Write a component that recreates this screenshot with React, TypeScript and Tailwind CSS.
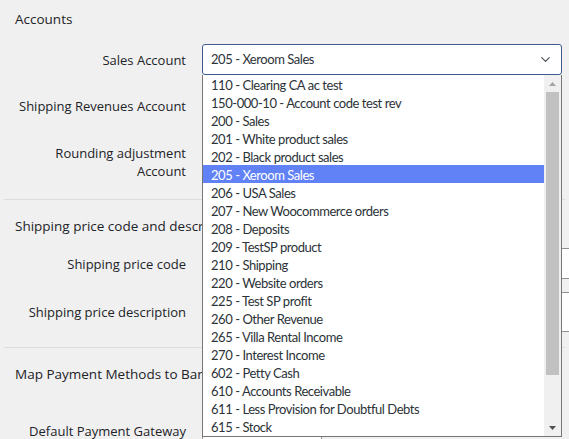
import { ChevronDown } from "lucide-react";

const accounts = [
  "110 - Clearing CA ac test",
  "150-000-10 - Account code test rev",
  "200 - Sales",
  "201 - White product sales",
  "202 - Black product sales",
  "205 - Xeroom Sales",
  "206 - USA Sales",
  "207 - New Woocommerce orders",
  "208 - Deposits",
  "209 - TestSP product",
  "210 - Shipping",
  "220 - Website orders",
  "225 - Test SP profit",
  "260 - Other Revenue",
  "265 - Villa Rental Income",
  "270 - Interest Income",
  "602 - Petty Cash",
  "610 - Accounts Receivable",
  "611 - Less Provision for Doubtful Debts",
  "615 - Stock",
];

const selected = "205 - Xeroom Sales";

function Label({ children }: { children: React.ReactNode }) {
  return <div className="w-[186px] shrink-0 text-right leading-[18px] text-[13px] text-[#1d2327]">{children}</div>;
}

function Dropdown() {
  return (
    <div className="absolute left-0 top-[31px] z-10 flex h-[362px] w-[360px] border border-[#767676] border-t-0 bg-white">
      <ul className="flex-1 overflow-hidden">
        {accounts.map((a) => (
          <li
            key={a}
            className={`h-[18px] whitespace-nowrap pl-[8px] pt-[1px] text-[13px] leading-[18px] tracking-[-0.45px] ${a === selected ? "bg-[#6082f6] text-white" : "text-[#2c3338]"}`}
          >
            {a}
          </li>
        ))}
      </ul>
      <div className="flex w-[17px] flex-col items-center bg-[#f0f0f0]">
        <div className="flex h-[17px] items-center justify-center">
          <svg width="7" height="4" viewBox="0 0 7 4"><path d="M3.5 0L7 4H0z" fill="#a3a3a3" /></svg>
        </div>
        <div className="h-[283px] w-[13px] bg-[#c1c1c1]" />
        <div className="flex-1" />
        <div className="flex h-[17px] items-center justify-center">
          <svg width="7" height="4" viewBox="0 0 7 4"><path d="M0 0H7L3.5 4z" fill="#505050" /></svg>
        </div>
      </div>
    </div>
  );
}

export default function App() {
  return (
    <div className="h-[439px] w-[569px] overflow-hidden bg-[#f0f0f1] text-[#1d2327]" style={{ fontFamily: '"Open Sans", sans-serif' }}>
      <div className="pl-[15px] pt-[10px] text-[13.5px] font-medium leading-[18px]">Accounts</div>

      <div className="mt-[16px] flex items-center gap-[16px]">
        <Label>Sales Account</Label>
        <div className="relative w-[360px]" style={{ fontFamily: "Lato, sans-serif" }}>
          <div className="flex h-[31px] items-center justify-between rounded-[3px] border border-[#3d5a8c] bg-white pl-[8px] pr-[8px] text-[13px] tracking-[-0.45px] text-[#2c3338]">
            <span>205 - Xeroom Sales</span>
            <ChevronDown size={15} strokeWidth={2} color="#50575e" />
          </div>
          <Dropdown />
        </div>
      </div>

      <div className="mt-[15px] flex items-center gap-[16px]">
        <Label>Shipping Revenues Account</Label>
        <div className="h-[31px] w-[360px] rounded-[3px] border border-[#8c8f94] bg-white" />
      </div>

      <div className="mt-[23px] flex items-center gap-[16px]">
        <Label>
          Rounding adjustment
          <br />
          Account
        </Label>
        <div className="h-[31px] w-[360px] rounded-[3px] border border-[#8c8f94] bg-white" />
      </div>

      <div className="mx-[4px] mt-[19px] border-t border-[#dcdcde]" />

      <div className="whitespace-nowrap pl-[15px] pt-[17px] text-[13.5px] font-medium leading-[18px]">Shipping price code and description</div>

      <div className="mt-[13px] flex items-center gap-[16px]">
        <Label>Shipping price code</Label>
        <div className="ml-[150px] h-[31px] w-[400px] shrink-0 rounded-[3px] border border-[#8c8f94] bg-white" />
      </div>

      <div className="mt-[13px] flex items-center gap-[16px]">
        <Label>Shipping price description</Label>
        <div className="ml-[150px] h-[40px] w-[400px] shrink-0 rounded-[3px] border border-[#8c8f94] bg-white" />
      </div>

      <div className="mx-[4px] mt-[15px] border-t border-[#dcdcde]" />

      <div className="whitespace-nowrap pl-[15px] pt-[17px] text-[13.5px] font-medium leading-[18px]">Map Payment Methods to Bank Accounts</div>

      <div className="mt-[32px] flex items-center gap-[16px]">
        <Label>Default Payment Gateway</Label>
        <div className="h-[31px] w-[120px] rounded-[3px] border border-[#8c8f94] bg-white" />
      </div>
    </div>
  );
}
